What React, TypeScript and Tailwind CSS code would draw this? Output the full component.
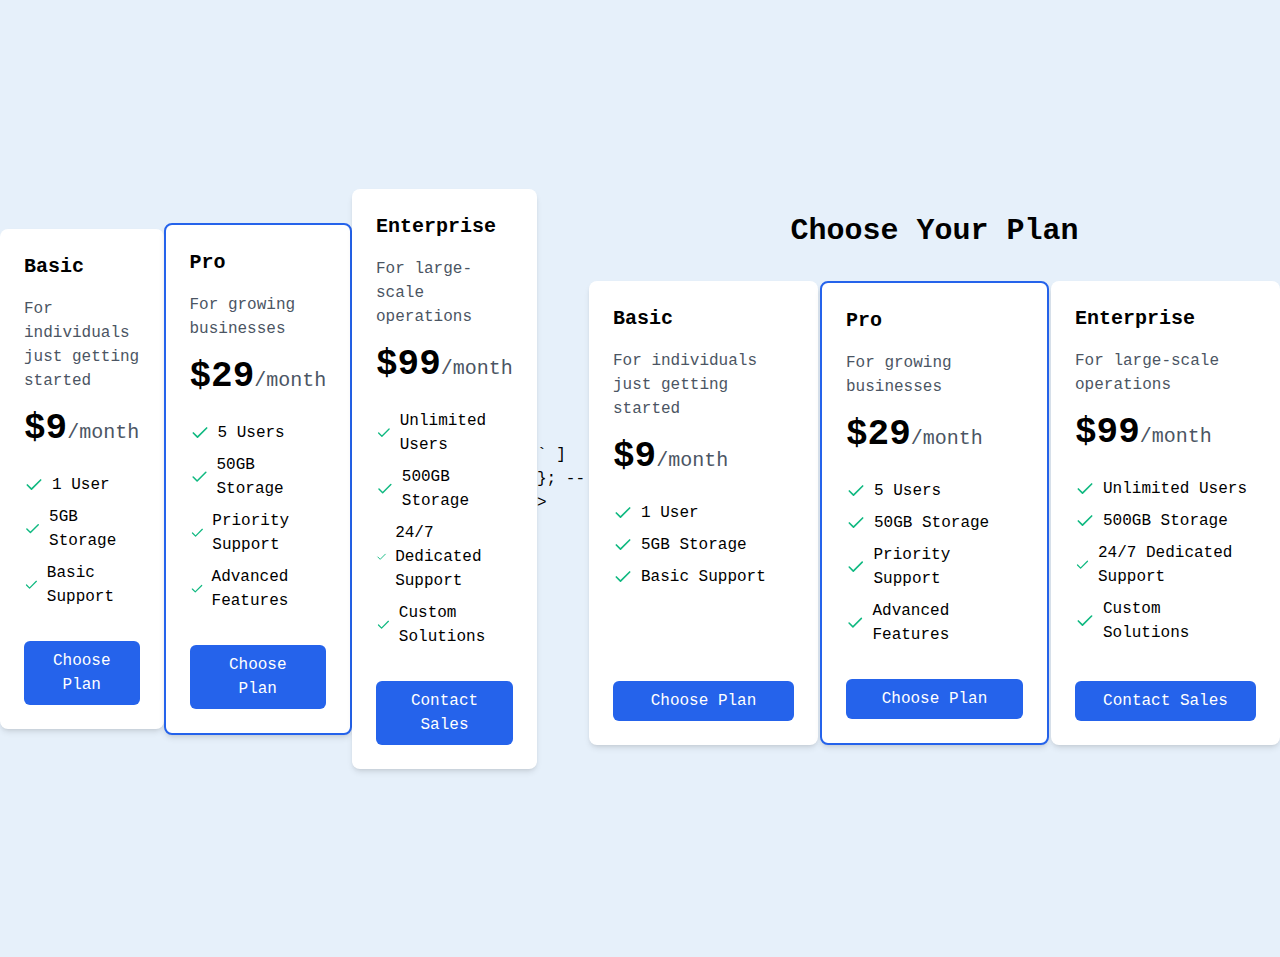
import { Check } from "lucide-react";

type Plan = {
    name: string;
    desc: string;
    price: string;
    features: string[];
    cta: string;
    featured?: boolean;
};

const plans: Plan[] = [
    {
        name: "Basic",
        desc: "For individuals just getting started",
        price: "$9",
        features: ["1 User", "5GB Storage", "Basic Support"],
        cta: "Choose Plan",
    },
    {
        name: "Pro",
        desc: "For growing businesses",
        price: "$29",
        features: ["5 Users", "50GB Storage", "Priority Support", "Advanced Features"],
        cta: "Choose Plan",
        featured: true,
    },
    {
        name: "Enterprise",
        desc: "For large-scale operations",
        price: "$99",
        features: ["Unlimited Users", "500GB Storage", "24/7 Dedicated Support", "Custom Solutions"],
        cta: "Contact Sales",
    },
];

// one pricing card, width comes from the parent
const PlanCard = ({ plan, className = "" }: { plan: Plan; className?: string }) => {
    return (
        <div
            className={`flex flex-col bg-white rounded-lg shadow-md p-6 ${
                plan.featured ? "border-2 border-[#2563eb]" : ""
            } ${className}`}
        >
            <h3 className="text-xl font-bold mb-4">{plan.name}</h3>
            <p className="text-[#4b5563] mb-4">{plan.desc}</p>
            <div className="text-4xl font-bold mb-6">
                {plan.price}
                <span className="text-xl font-normal text-[#4b5563]">/month</span>
            </div>
            <ul className="flex-1 space-y-2 mb-8">
                {plan.features.map((f) => (
                    <li key={f} className="flex items-center">
                        <Check className="w-5 h-5 mr-2 text-[#10b981]" strokeWidth={2} />
                        <span>{f}</span>
                    </li>
                ))}
            </ul>
            <button className="w-full bg-[#2563eb] text-white py-2 px-4 rounded-md">{plan.cta}</button>
        </div>
    );
};

const leftWidths = ["w-[163.5px]", "w-[188.5px]", "w-[185px]"];

export default function App() {
    return (
        <div
            className="min-h-screen flex items-center bg-[#e6f0fa] text-black"
            style={{ fontFamily: '"Liberation Mono", "Courier New", monospace' }}
        >
            {/* stray cards that ended up outside the section */}
            {plans.map((p, i) => (
                <PlanCard key={p.name} plan={p} className={`shrink-0 ${leftWidths[i]}`} />
            ))}

            <div className="shrink-0 w-[52px]">{"` ] }; -->"}</div>

            <div className="flex-1">
                <h1 className="text-3xl font-bold text-center mb-8">Choose Your Plan</h1>
                <div className="grid grid-cols-3 gap-[2px]">
                    {plans.map((p) => (
                        <PlanCard key={p.name} plan={p} />
                    ))}
                </div>
            </div>
        </div>
    );
}
